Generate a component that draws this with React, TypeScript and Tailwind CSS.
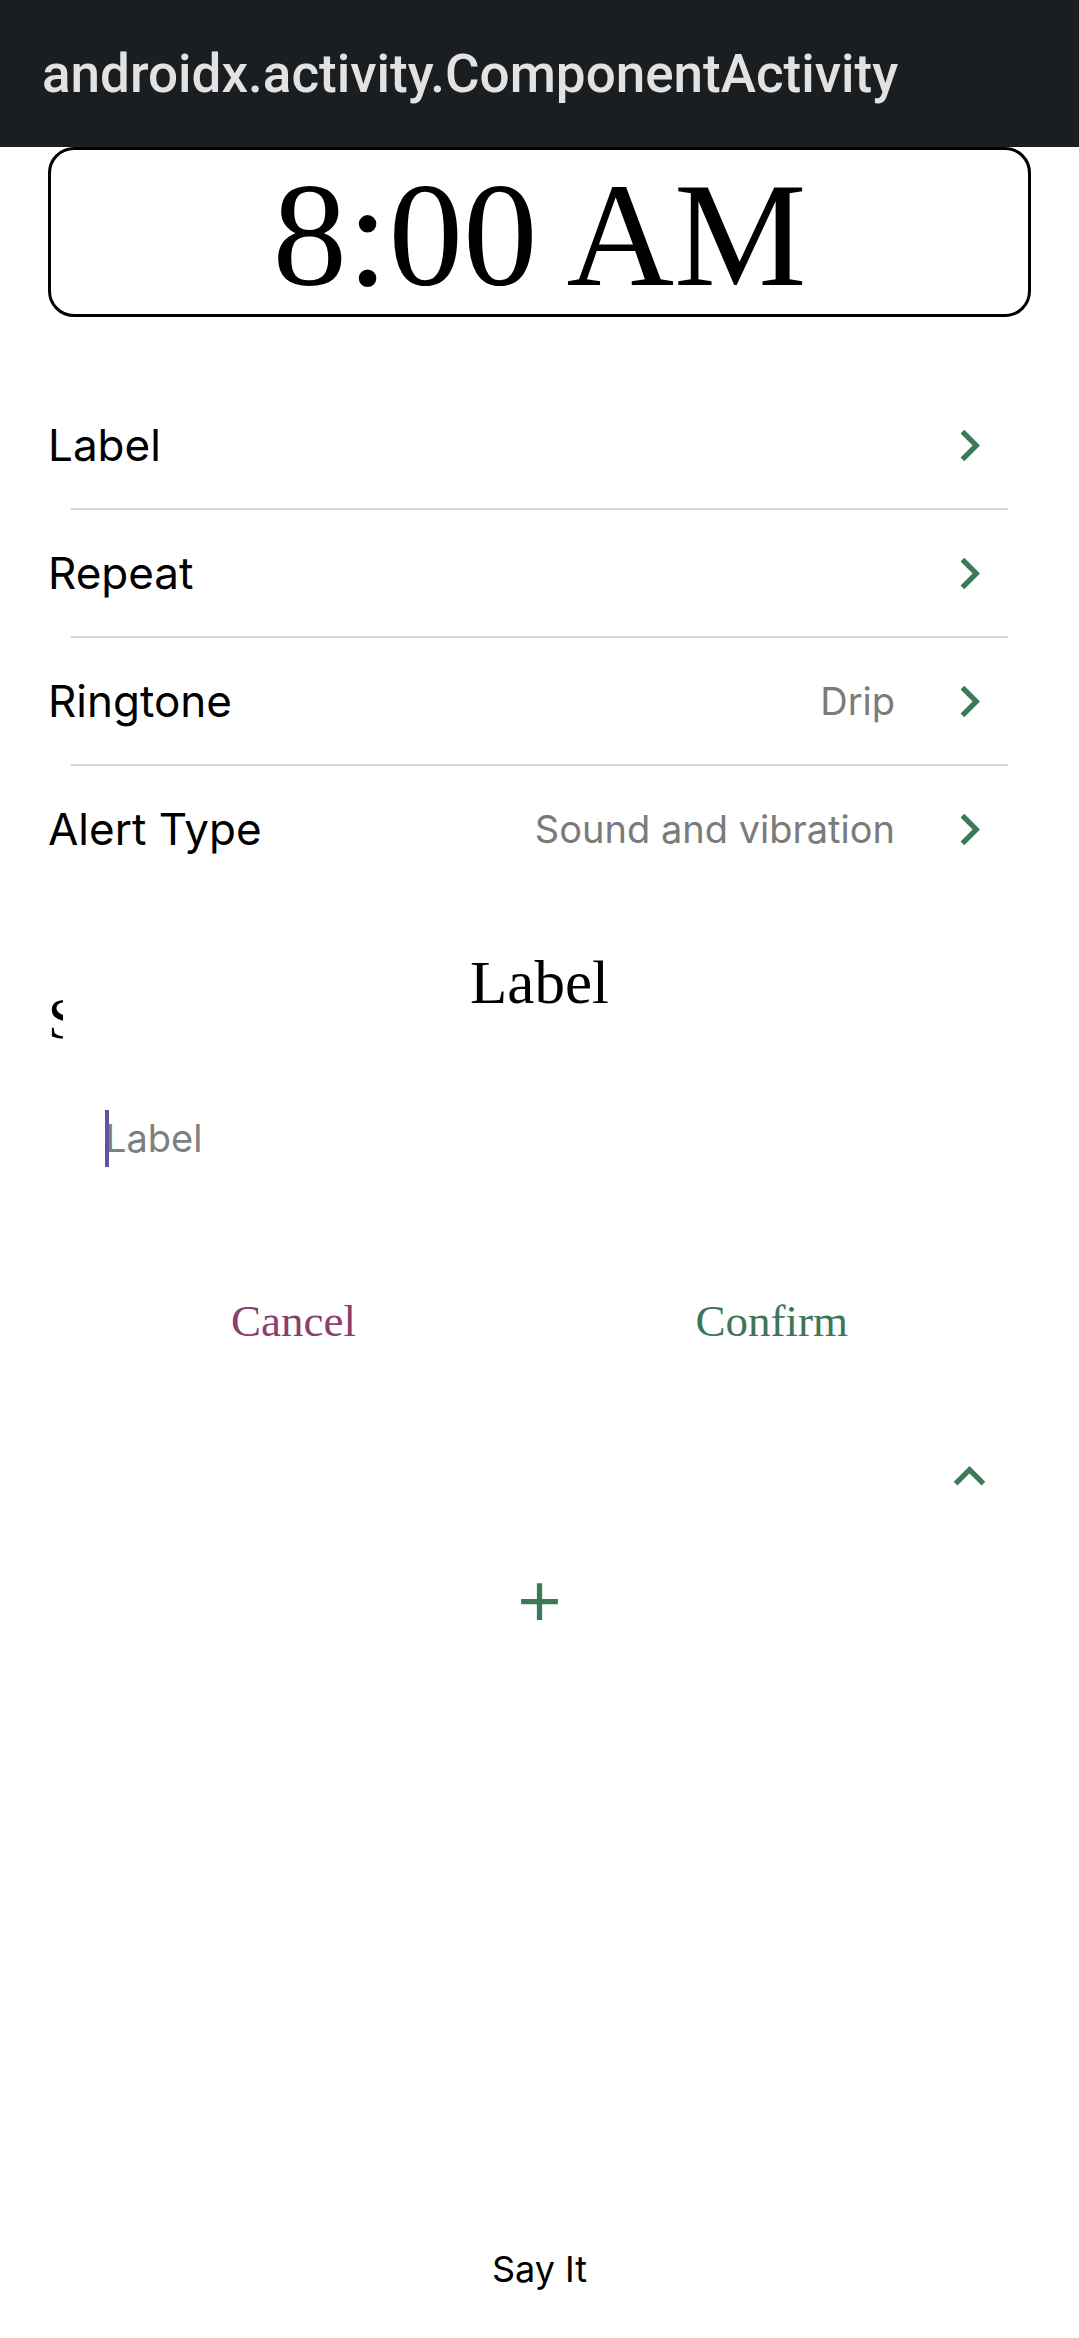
import React from 'react'

const serif = { fontFamily: '"Liberation Serif", serif' }

function ChevronRight() {
  return (
    <svg viewBox="0 0 24 24" className="w-[63px] h-[63px] fill-[#3d7857]">
      <path d="M8.59 16.59L13.17 12 8.59 7.41 10 6l6 6-6 6-1.41-1.41z" />
    </svg>
  )
}

const rows = [
  { label: 'Label', value: '' },
  { label: 'Repeat', value: '' },
  { label: 'Ringtone', value: 'Drip' },
  { label: 'Alert Type', value: 'Sound and vibration' },
]

export default function App() {
  return (
    <div className="relative w-full h-[2338px] flex flex-col bg-white font-['Inter',sans-serif]">
      <div className="h-[147px] bg-[#1b1e21] pl-[42px] pt-[48px]">
        <div className="font-['Roboto',sans-serif] font-medium text-[53px] leading-[53px] text-[#e2e2e2]">
          androidx.activity.ComponentActivity
        </div>
      </div>

      <div className="mx-[48px] h-[170px] border-[3px] border-black rounded-[26px] flex items-center justify-center pt-[4px]">
        <span className="text-[149px] leading-none text-black" style={serif}>
          8:00 AM
        </span>
      </div>

      <div className="mt-[65px] flex flex-col">
        {rows.map((r, i) => (
          <div key={r.label}>
            <div className="h-[126px] flex items-center pl-[48px] pr-[78px]">
              <span className="flex-1 text-[44px] text-black">{r.label}</span>
              {r.value && <span className="text-[38px] text-[#7b7b7b]">{r.value}</span>}
              <span className="ml-[43px]">
                <ChevronRight />
              </span>
            </div>
            {i < rows.length - 1 && <div className="mx-[71px] h-[2px] bg-[#d6d6d6]" />}
          </div>
        ))}
      </div>

      <div className="mt-[98px] pl-[48px] text-[57px] leading-none text-black" style={serif}>
        Snooze
      </div>

      <div className="mt-[398px] flex justify-end pr-[78px]">
        <svg viewBox="0 0 24 24" className="w-[63px] h-[63px] fill-[#3d7857]">
          <path d="M7.41 15.41L12 10.83l4.59 4.58L18 14l-6-6-6 6z" />
        </svg>
      </div>

      <div className="mt-[62px] flex justify-center">
        <svg viewBox="0 0 24 24" className="w-[63px] h-[63px] fill-[#3d7857]">
          <path d="M19 13h-6v6h-2v-6H5v-2h6V5h2v6h6v2z" />
        </svg>
      </div>

      <div className="mt-auto pb-[51px] text-center text-[36px] leading-none text-black">Say It</div>

      {/* label dialog */}
      <div className="absolute left-[63px] top-[885px] w-[953px] h-[535px] bg-white flex flex-col">
        <div className="pt-[67px] text-center text-[61px] leading-none text-black" style={serif}>
          Label
        </div>
        <div className="relative mt-[97px] pl-[42px] h-[57px]">
          <div className="text-[38px] leading-[57px] text-[#7f7f7f]">Label</div>
          <div className="absolute left-[42px] top-0 w-[4px] h-[57px] bg-[#6750a4]" />
        </div>
        <div className="mt-[132px] flex justify-between px-[168px]">
          <span className="text-[45px] leading-none text-[#8c3f6e]" style={serif}>
            Cancel
          </span>
          <span className="text-[45px] leading-none text-[#3e7656]" style={serif}>
            Confirm
          </span>
        </div>
      </div>
    </div>
  )
}
